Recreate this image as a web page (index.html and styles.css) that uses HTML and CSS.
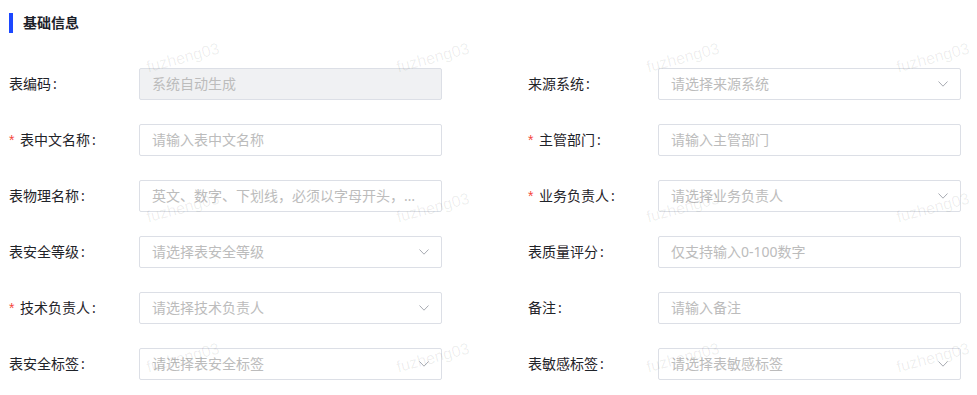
FILE: index.html
```html
<!DOCTYPE html>
<html lang="zh-CN">
<head>
<meta charset="utf-8">
<title>基础信息</title>
<link rel="stylesheet" href="styles.css">
</head>
<body>
<div class="page">
  <div class="section-title"><span class="bar"></span><span class="title-text">基础信息</span></div>
  <div class="form">
    <div class="item">
      <div class="label">表编码<span class="colon">:</span></div>
      <div class="field disabled"><span class="ph">系统自动生成</span></div>
    </div>
    <div class="item">
      <div class="label">来源系统<span class="colon">:</span></div>
      <div class="field select"><span class="ph">请选择来源系统</span><svg class="arrow" viewBox="0 0 10 6"><path d="M0.5 0.5 L5 5.2 L9.5 0.5"/></svg></div>
    </div>

    <div class="item">
      <div class="label"><span class="req">*</span>表中文名称<span class="colon">:</span></div>
      <div class="field"><span class="ph">请输入表中文名称</span></div>
    </div>
    <div class="item">
      <div class="label"><span class="req">*</span>主管部门<span class="colon">:</span></div>
      <div class="field"><span class="ph">请输入主管部门</span></div>
    </div>

    <div class="item">
      <div class="label">表物理名称<span class="colon">:</span></div>
      <div class="field"><span class="ph">英文、数字、下划线，必须以字母开头，长度不超过64个字符</span></div>
    </div>
    <div class="item">
      <div class="label"><span class="req">*</span>业务负责人<span class="colon">:</span></div>
      <div class="field select"><span class="ph">请选择业务负责人</span><svg class="arrow" viewBox="0 0 10 6"><path d="M0.5 0.5 L5 5.2 L9.5 0.5"/></svg></div>
    </div>

    <div class="item">
      <div class="label">表安全等级<span class="colon">:</span></div>
      <div class="field select"><span class="ph">请选择表安全等级</span><svg class="arrow" viewBox="0 0 10 6"><path d="M0.5 0.5 L5 5.2 L9.5 0.5"/></svg></div>
    </div>
    <div class="item">
      <div class="label">表质量评分<span class="colon">:</span></div>
      <div class="field"><span class="ph">仅支持输入0-100数字</span></div>
    </div>

    <div class="item">
      <div class="label"><span class="req">*</span>技术负责人<span class="colon">:</span></div>
      <div class="field select"><span class="ph">请选择技术负责人</span><svg class="arrow" viewBox="0 0 10 6"><path d="M0.5 0.5 L5 5.2 L9.5 0.5"/></svg></div>
    </div>
    <div class="item">
      <div class="label">备注<span class="colon">:</span></div>
      <div class="field"><span class="ph">请输入备注</span></div>
    </div>

    <div class="item">
      <div class="label">表安全标签<span class="colon">:</span></div>
      <div class="field select"><span class="ph">请选择表安全标签</span><svg class="arrow" viewBox="0 0 10 6"><path d="M0.5 0.5 L5 5.2 L9.5 0.5"/></svg></div>
    </div>
    <div class="item">
      <div class="label">表敏感标签<span class="colon">:</span></div>
      <div class="field select"><span class="ph">请选择表敏感标签</span><svg class="arrow" viewBox="0 0 10 6"><path d="M0.5 0.5 L5 5.2 L9.5 0.5"/></svg></div>
    </div>
  </div>

  <div class="watermarks" aria-hidden="true">
    <span class="wm">fuzheng03</span><span class="wm">fuzheng03</span><span class="wm">fuzheng03</span><span class="wm">fuzheng03</span>
    <span class="wm">fuzheng03</span><span class="wm">fuzheng03</span><span class="wm">fuzheng03</span><span class="wm">fuzheng03</span>
    <span class="wm">fuzheng03</span><span class="wm">fuzheng03</span><span class="wm">fuzheng03</span><span class="wm">fuzheng03</span>
  </div>
</div>
</body>
</html>
```
FILE: styles.css
```css
* { box-sizing: border-box; }
html, body {
  margin: 0;
  padding: 0;
  background: #ffffff;
}
body {
  font-family: "Noto Sans", "Noto Sans CJK SC", sans-serif;
  font-size: 14px;
  color: #1f2329;
  overflow: hidden;
}
.page {
  position: relative;
  width: 977px;
  height: 395px;
  padding: 13px 0 0 9px;
  overflow: hidden;
}
.section-title {
  display: flex;
  align-items: center;
  height: 20px;
  margin-bottom: 35px;
}
.bar {
  width: 4px;
  height: 20px;
  background: #1c48ff;
  margin-right: 10px;
}
.title-text {
  font-weight: 700;
  font-size: 14px;
  line-height: 20px;
  color: #1d2129;
}
.form {
  display: grid;
  grid-template-columns: 519px 433px;
  row-gap: 24px;
}
.item {
  display: flex;
  align-items: center;
  height: 32px;
}
.label {
  width: 130px;
  flex: none;
  line-height: 20px;
  color: #1f2329;
  white-space: nowrap;
}
.req {
  display: inline-block;
  width: 11px;
  color: #f5483b;
  font-family: "Liberation Sans", sans-serif;
}
.colon {
  margin-left: 2px;
}
.field {
  width: 303px;
  height: 32px;
  flex: none;
  border: 1px solid #dcdfe6;
  border-radius: 2px;
  background: #ffffff;
  display: flex;
  align-items: center;
  padding: 0 12px;
}
.field.disabled {
  background: #f0f1f3;
}
.ph {
  flex: 1;
  min-width: 0;
  color: #bcbcbc;
  line-height: 20px;
  white-space: nowrap;
  overflow: hidden;
  text-overflow: ellipsis;
}
.select .ph {
  padding-right: 8px;
}
.arrow {
  width: 10px;
  height: 6px;
  flex: none;
  fill: none;
  stroke: #a8abb2;
  stroke-width: 1;
}
.watermarks {
  position: absolute;
  top: -17px;
  left: 58px;
  width: 1000px;
  height: 450px;
  display: grid;
  grid-template-columns: repeat(4, 250px);
  grid-template-rows: repeat(3, 150px);
  pointer-events: none;
}
.wm {
  display: flex;
  align-items: center;
  justify-content: center;
  font-family: "Liberation Sans", sans-serif;
  font-size: 16px;
  color: rgba(0, 0, 0, 0.07);
  transform: rotate(-15deg);
  white-space: nowrap;
}
```
